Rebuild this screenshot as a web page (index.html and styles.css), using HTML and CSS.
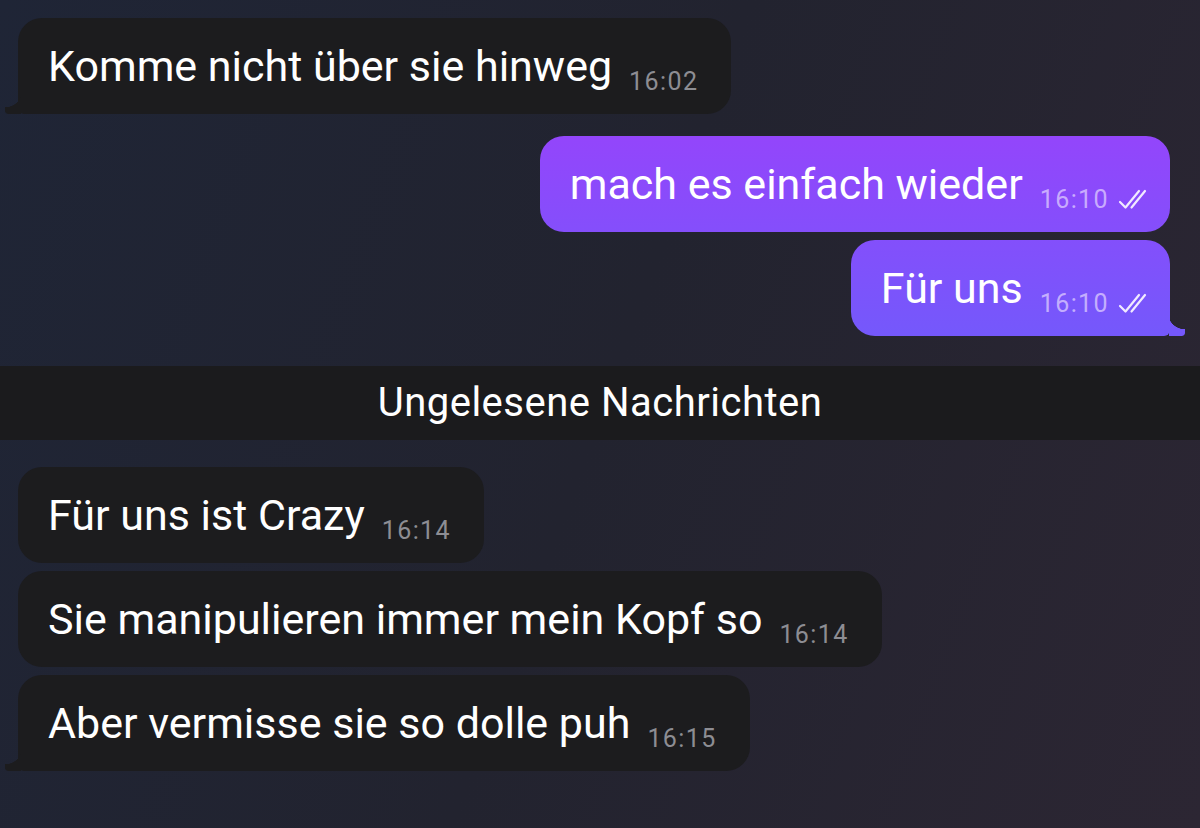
FILE: index.html
```html
<!DOCTYPE html>
<html lang="de">
<head>
  <meta charset="UTF-8">
  <meta name="viewport" content="width=device-width, initial-scale=1.0">
  <title>Chat</title>
  <link rel="stylesheet" href="styles.css">
</head>
<body>

  <div class="chat">

    <!-- eingehend -->
    <div class="row in gap-big">
      <div class="bubble in tail">
        <span class="text">Komme nicht über sie hinweg</span>
        <span class="time">16:02</span>
      </div>
    </div>

    <!-- ausgehend -->
    <div class="row out gap-small">
      <div class="bubble out">
        <span class="text">mach es einfach wieder</span>
        <span class="time">16:10</span>
        <svg class="check" viewBox="0 0 32 22" width="32" height="22">
          <path d="M2 14 L7.5 19.5 L21 3" />
          <path d="M13.5 19.5 L27 3" />
        </svg>
      </div>
    </div>
    <div class="row out">
      <div class="bubble out tail">
        <span class="text">Für uns</span>
        <span class="time">16:10</span>
        <svg class="check" viewBox="0 0 32 22" width="32" height="22">
          <path d="M2 14 L7.5 19.5 L21 3" />
          <path d="M13.5 19.5 L27 3" />
        </svg>
      </div>
    </div>

    <div class="unread">Ungelesene Nachrichten</div>

    <div class="row in gap-small">
      <div class="bubble in">
        <span class="text">Für uns ist Crazy</span>
        <span class="time">16:14</span>
      </div>
    </div>
    <div class="row in gap-small">
      <div class="bubble in">
        <span class="text">Sie manipulieren immer mein Kopf so</span>
        <span class="time">16:14</span>
      </div>
    </div>
    <div class="row in">
      <div class="bubble in tail">
        <span class="text">Aber vermisse sie so dolle puh</span>
        <span class="time">16:15</span>
      </div>
    </div>

  </div>

</body>
</html>
```

FILE: styles.css
```css
html, body {
  margin: 0;
  padding: 0;
  height: 100%;
}

body {
  font-family: Roboto, "Noto Sans", Arial, sans-serif;
  color: #fff;
  background: linear-gradient(110deg, #1f2536 0%, #22232f 50%, #2c2633 100%);
  overflow: hidden;
}

.chat {
  display: flex;
  flex-direction: column;
  padding-top: 18px;
}

.row {
  display: flex;
  margin-bottom: 8px;
}

.row.in {
  justify-content: flex-start;
  padding-left: 18px;
}

.row.out {
  justify-content: flex-end;
  padding-right: 30px;
}

.row.gap-big {
  margin-bottom: 22px;
}

.bubble {
  position: relative;
  display: flex;
  align-items: flex-end;
  padding: 22px 33px 22px 30px;
  border-radius: 24px;
}

.bubble.in {
  background: #1c1c1e;
}

.bubble.out {
  padding-right: 20px;
  background: linear-gradient(180deg, #9445fb 130px, #7359fb 345px) fixed;
}

.text {
  font-size: 43px;
  line-height: 52px;
  white-space: nowrap;
}

.time {
  font-size: 25px;
  line-height: 25px;
  letter-spacing: 1.4px;
  margin-left: 17px;
  margin-bottom: -2px;
  color: #8d8d93;
}

.bubble.out .time {
  color: rgba(230, 215, 255, 0.7);
}

.check {
  margin-left: 9px;
  margin-bottom: 0;
  fill: none;
  stroke: #f1eaff;
  stroke-width: 2.2;
  stroke-linecap: round;
  stroke-linejoin: round;
}

/* Schwanz der letzten Blase */
.bubble.tail.in {
  border-bottom-left-radius: 6px;
}

.bubble.tail.out {
  border-bottom-right-radius: 6px;
}

.bubble.tail::before {
  content: "";
  position: absolute;
  bottom: 0;
  width: 16px;
  height: 24px;
}

.bubble.tail.in::before {
  left: -13px;
  background: #1c1c1e;
  -webkit-mask: radial-gradient(circle at 0 0, transparent 17px, #000 17.5px);
  mask: radial-gradient(circle at 0 0, transparent 17px, #000 17.5px);
  border-bottom-left-radius: 3px;
}

.bubble.tail.out::before {
  right: -15px;
  background: linear-gradient(180deg, #9445fb 130px, #7359fb 345px) fixed;
  -webkit-mask: radial-gradient(circle at 100% 0, transparent 17px, #000 17.5px);
  mask: radial-gradient(circle at 100% 0, transparent 17px, #000 17.5px);
  border-bottom-right-radius: 3px;
}

.unread {
  margin: 22px 0 27px;
  height: 74px;
  line-height: 74px;
  text-align: center;
  background: #1b1b1d;
  font-size: 40px;
  letter-spacing: 0.5px;
  color: #fff;
}
```
